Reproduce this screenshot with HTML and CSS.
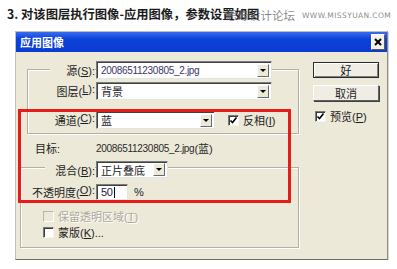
FILE: index.html
```html
<!DOCTYPE html>
<html>
    <head>
        <title>应用图像</title>
        <link rel="stylesheet" href="styles.css">
    </head>
    <body>
        <div class='topo'>
            <h3 class='passo'>3. 对该图层执行图像-应用图像，参数设置如图</h3>
            <div class='marca'><span class='marca-cn'>思缘设计论坛</span><span class='marca-url'>WWW.MISSYUAN.COM</span></div>
        </div>

        <div class='dialogo'>
            <div class='barra'>
                <span class='titulo'>应用图像</span>
                <span class='fechar'>
                    <svg width='8' height='8' viewBox='0 0 8 8'><path d='M1 1L7 7M7 1L1 7' stroke='#000' stroke-width='2'/></svg>
                </span>
            </div>

            <div class='conteudo'>
                <div class='principal'>
                    <div class='grupo'>
                        <div class='linha primeira'>
                            <div class='rotulo'><span class='cobre'>源(<u>S</u>):</span></div>
                            <div class='combo largo'><span class='arquivo'>20086511230805_2.jpg</span><span class='seta'></span></div>
                        </div>
                        <div class='linha segunda'>
                            <div class='rotulo'>图层(<u>L</u>):</div>
                            <div class='combo largo'><span>背景</span><span class='seta'></span></div>
                        </div>
                        <div class='linha terceira'>
                            <div class='rotulo'>通道(<u>C</u>):</div>
                            <div class='combo medio'><span>蓝</span><span class='seta'></span></div>
                            <span class='caixa marcada inverter'>
                                <svg width='9' height='9' viewBox='0 0 9 9'><path d='M1.5 4.5L3.5 6.5L7.5 1.5' fill='none' stroke='#000' stroke-width='1.6'/></svg>
                            </span>
                            <span class='texto-caixa'>反相(<u>I</u>)</span>
                        </div>
                    </div>

                    <div class='alvo'>
                        <span class='alvo-rotulo'>目标:</span>
                        <span class='arquivo alvo-valor'>20086511230805_2.jpg</span><span class='alvo-canal'>(蓝)</span>
                    </div>

                    <div class='grupo grupo2'>
                        <div class='linha mistura'>
                            <div class='rotulo'><span class='cobre cobre2'>混合(<u>B</u>):</span></div>
                            <div class='combo curto'><span>正片叠底</span><span class='seta'></span></div>
                        </div>
                        <div class='linha opacidade'>
                            <div class='rotulo'>不透明度(<u>O</u>):</div>
                            <div class='entrada'><span class='arquivo'>50</span><span class='cursor'></span></div>
                            <span class='pct'>%</span>
                        </div>
                        <div class='opcao desligada'>
                            <span class='caixa'></span>
                            <span class='texto-caixa'>保留透明区域(<u>T</u>)</span>
                        </div>
                        <div class='opcao'>
                            <span class='caixa'></span>
                            <span class='texto-caixa'>蒙版(<u>K</u>)...</span>
                        </div>
                    </div>
                </div>

                <div class='lateral'>
                    <div class='botao padrao'>好</div>
                    <div class='botao'>取消</div>
                    <div class='previa'>
                        <span class='caixa marcada'>
                            <svg width='9' height='9' viewBox='0 0 9 9'><path d='M1.5 4.5L3.5 6.5L7.5 1.5' fill='none' stroke='#000' stroke-width='1.6'/></svg>
                        </span>
                        <span class='texto-caixa'>预览(<u>P</u>)</span>
                    </div>
                </div>
            </div>

            <div class='destaque'></div>
        </div>
    </body>
</html>
```

FILE: styles.css
```css
body{
    margin: 0;
    background-color: #fff;
    overflow: hidden;
    font-family: "Noto Sans CJK SC", sans-serif;
    color: #111;
}
.topo{
    position: relative;
    height: 31px;
}
.passo{
    margin: 0;
    padding: 6px 0 0 7px;
    font-size: 12.3px;
    line-height: 16px;
    font-weight: bold;
    color: #1a1a1a;
}
.marca{
    position: absolute;
    left: 226px;
    top: 7px;
    display: flex;
    align-items: center;
    gap: 7px;
    color: rgba(105, 105, 105, 0.8);
}
.marca-cn{
    font-size: 11.5px;
    line-height: 16px;
}
.marca-url{
    font-family: "DejaVu Sans", sans-serif;
    font-size: 7.5px;
    letter-spacing: 0.4px;
}

/* janela */
.dialogo{
    position: relative;
    margin-left: 15px;
    width: 373px;
    height: 229px;
    box-sizing: border-box;
    background-color: #ece9d8;
    border: 1px solid #c4c1b4;
    border-right-color: #8e8c82;
    border-bottom-color: #6d6b64;
    box-shadow: 1px 1px 0 #d6d6d6;
    font-family: "Liberation Sans", "Noto Sans CJK SC", sans-serif;
    font-size: 11px;
    color: #1c1c1c;
}
.barra{
    height: 20px;
    display: flex;
    align-items: center;
    justify-content: space-between;
    padding: 0 2px 0 4px;
    background: linear-gradient(#3a6cf0, #0c42da 35%, #0a3cd2);
}
.titulo{
    color: #fff;
    font-size: 11px;
    font-weight: bold;
}
.fechar{
    width: 12px;
    height: 14px;
    display: flex;
    align-items: center;
    justify-content: center;
    background-color: #f4f2ea;
    border: 1px solid;
    border-color: #fff #5a5a5a #5a5a5a #fff;
}
.conteudo{
    display: flex;
}
.principal{
    width: 284px;
    padding-left: 11px;
    box-sizing: border-box;
}
.grupo{
    margin-top: 17px;
    width: 272px;
    box-sizing: border-box;
    padding-bottom: 4px;
    border: 1px solid #b3b0a2;
    box-shadow: inset 1px 1px 0 #fff, 1px 1px 0 #fff;
}
.linha{
    display: flex;
    align-items: center;
    height: 18px;
}
.primeira{
    margin-top: -9px;
}
.segunda{
    margin-top: 3px;
}
.terceira{
    margin-top: 11px;
}
.rotulo{
    width: 67px;
    padding-right: 1px;
    display: flex;
    justify-content: flex-end;
    white-space: nowrap;
}
.cobre{
    background-color: #ece9d8;
    padding-left: 16px;
}
.cobre2{
    padding-left: 10px;
}
.combo{
    height: 18px;
    box-sizing: border-box;
    display: flex;
    align-items: center;
    justify-content: space-between;
    padding: 0 2px 0 4px;
    background-color: #fff;
    border: 1px solid;
    border-color: #7c7c7c #e4e4e4 #e4e4e4 #7c7c7c;
    box-shadow: inset 1px 1px 0 #404040;
}
.largo{
    width: 176px;
}
.medio{
    width: 119px;
}
.curto{
    width: 72px;
    height: 17px;
}
.seta{
    width: 12px;
    height: 13px;
    box-sizing: border-box;
    display: flex;
    align-items: center;
    justify-content: center;
    background-color: #ece9d8;
    border: 1px solid;
    border-color: #fff #6a6a6a #6a6a6a #fff;
}
.seta::after{
    content: '';
    border-left: 3px solid transparent;
    border-right: 3px solid transparent;
    border-top: 3px solid #000;
}
.arquivo{
    font-family: "Liberation Sans", sans-serif;
    font-size: 10px;
    letter-spacing: -0.3px;
    color: #3a3468;
}
.caixa{
    width: 11px;
    height: 11px;
    box-sizing: border-box;
    display: inline-flex;
    align-items: center;
    justify-content: center;
    background-color: #fff;
    border: 1px solid;
    border-color: #7a7a7a #f4f4f4 #f4f4f4 #7a7a7a;
    box-shadow: inset 1px 1px 0 #3c3c3c;
}
.inverter{
    margin-left: 13px;
}
.texto-caixa{
    margin-left: 4px;
    white-space: nowrap;
}

.alvo{
    margin-top: 6px;
    height: 16px;
    display: flex;
    align-items: center;
    padding-left: 8px;
}
.alvo-rotulo{
    width: 61px;
}
.alvo-valor{
    color: #2a2a2a;
}
.alvo-canal{
    color: #2a2a2a;
}

.grupo2{
    margin-top: 11px;
    margin-left: -7px;
    width: 279px;
    padding-bottom: 8px;
}
.grupo2 .rotulo{
    width: 74px;
}
.mistura{
    margin-top: -7px;
    height: 17px;
}
.opacidade{
    margin-top: 6px;
    height: 16px;
}
.entrada{
    width: 32px;
    height: 16px;
    box-sizing: border-box;
    display: flex;
    align-items: center;
    padding-left: 4px;
    background-color: #fff;
    border: 1px solid;
    border-color: #7c7c7c #e4e4e4 #e4e4e4 #7c7c7c;
    box-shadow: inset 1px 1px 0 #404040;
}
.entrada .arquivo{
    font-size: 11px;
    color: #1a1a4a;
}
.cursor{
    width: 1px;
    height: 11px;
    margin-left: 1px;
    background-color: #000;
}
.pct{
    margin-left: 6px;
    font-size: 11px;
}
.opcao{
    height: 14px;
    display: flex;
    align-items: center;
    padding-left: 22px;
    margin-top: 9px;
}
.opcao + .opcao{
    margin-top: 2px;
}
.desligada .texto-caixa{
    color: #aca899;
    text-shadow: 1px 1px 0 #fff;
}
.desligada .caixa{
    background-color: #ece9d8;
    border-color: #b8b5a8 #fff #fff #b8b5a8;
    box-shadow: none;
}

/* botoes */
.lateral{
    padding-left: 13px;
    padding-top: 10px;
}
.botao{
    width: 66px;
    height: 16px;
    box-sizing: border-box;
    display: flex;
    align-items: center;
    justify-content: center;
    background-color: #f0eee4;
    border: 1px solid;
    border-color: #fff #606060 #606060 #fff;
    box-shadow: 1px 1px 0 #404040;
    margin-bottom: 7px;
}
.padrao{
    border-color: #2a2a2a;
    box-shadow: inset 1px 1px 0 #fff, inset -1px -1px 0 #808080;
}
.previa{
    display: flex;
    align-items: center;
    margin-top: 6px;
    margin-left: 2px;
}

/* marca vermelha */
.destaque{
    position: absolute;
    left: 2px;
    top: 77px;
    width: 273px;
    height: 94px;
    box-sizing: border-box;
    border: 3px solid #e31e1a;
}
```
